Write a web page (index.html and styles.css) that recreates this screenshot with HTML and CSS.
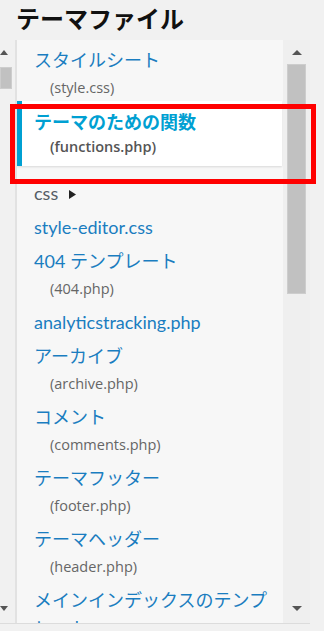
FILE: index.html
```html
<!DOCTYPE html>
<html lang="ja">
<head>
    <meta charset="UTF-8">
    <meta name="viewport" content="width=device-width, initial-scale=1.0">
    <title>テーマファイル</title>
    <link rel="stylesheet" href="styles.css">
</head>
<body>
    <h2 class="title">テーマファイル</h2>

    <div class="editor">
        <div class="bar bar-left">
            <span class="arrow up"></span>
            <span class="thumb"></span>
            <span class="arrow down"></span>
        </div>

        <ul class="file-list">
            <li class="first">
                <a href="#">スタイルシート</a>
                <span class="file">(style.css)</span>
            </li>
            <li class="highlight">
                <a href="#">テーマのための関数</a>
                <span class="file">(functions.php)</span>
            </li>
            <li class="folder">
                css
                <svg class="caret" width="7" height="9" viewBox="0 0 7 9"><path d="M0 0 L7 4.5 L0 9 Z" fill="#222"/></svg>
            </li>
            <li><a href="#">style-editor.css</a></li>
            <li>
                <a href="#">404 テンプレート</a>
                <span class="file">(404.php)</span>
            </li>
            <li><a href="#">analyticstracking.php</a></li>
            <li>
                <a href="#">アーカイブ</a>
                <span class="file">(archive.php)</span>
            </li>
            <li>
                <a href="#">コメント</a>
                <span class="file">(comments.php)</span>
            </li>
            <li>
                <a href="#">テーマフッター</a>
                <span class="file">(footer.php)</span>
            </li>
            <li>
                <a href="#">テーマヘッダー</a>
                <span class="file">(header.php)</span>
            </li>
            <li>
                <a href="#">メインインデックスのテンプレート</a>
                <span class="file">(index.php)</span>
            </li>
        </ul>

        <div class="bar bar-right">
            <span class="arrow up"></span>
            <span class="thumb"></span>
            <span class="arrow down"></span>
        </div>
    </div>

    <!-- 赤枠 -->
    <div class="marker"></div>
</body>
</html>
```

FILE: styles.css
```css
/* テーマ編集ファイル一覧 */
body {
    font-family: "Lato", "Noto Sans CJK JP", sans-serif;
    background-color: #f1f1f1;
    color: #23282d;
    margin: 0;
    padding: 0;
}

.title {
    font-family: "Noto Sans CJK JP", sans-serif;
    font-size: 24px;
    font-weight: bold;
    line-height: 36px;
    margin: 0;
    padding: 0 0 0 16px;
    height: 40px;
    color: #111;
}

.editor {
    display: flex;
    height: 583px;
    width: 310px;
    border-bottom: 1px solid #dcdcdc;
}

.bar {
    display: flex;
    flex-direction: column;
}

.bar-left {
    width: 15px;
    border-right: 2px solid #e2e2e2;
}

.bar-left .thumb {
    width: 12px;
    height: 22px;
    margin-top: 12px;
}

.bar-right {
    width: 27px;
    background-color: #efefef;
    align-items: center;
}

.bar-right .thumb {
    width: 19px;
    height: 230px;
    margin-top: 9px;
}

.arrow {
    width: 0;
    height: 0;
    border-left: 5px solid transparent;
    border-right: 5px solid transparent;
}

.arrow.up {
    border-bottom: 5px solid #555;
    margin-top: 10px;
}

.arrow.down {
    border-top: 5px solid #555;
    margin-top: auto;
    margin-bottom: 12px;
}

.bar-left .arrow {
    border-left-width: 4px;
    border-right-width: 4px;
}

.thumb {
    background-color: #c1c1c1;
    box-shadow: inset 0 0 0 1px #cdcdcd;
}

.file-list {
    list-style: none;
    margin: 0;
    padding: 3px 0 0 0;
    width: 266px;
    background-color: #f7f7f7;
    overflow: hidden;
}

.file-list li {
    padding: 3px 10px 3px 17px;
}

.file-list li.first {
    padding-bottom: 0;
}

.file-list a {
    display: block;
    font-size: 18px;
    line-height: 28px;
    color: #1a7dc0;
    text-decoration: none;
}

.file {
    display: block;
    font-family: "Open Sans", sans-serif;
    font-size: 14.5px;
    line-height: 27px;
    padding-left: 16px;
    color: #666;
}

.highlight {
    background-color: #fff;
    box-shadow: inset 5px 0 0 #00a0d2, 0 1px 2px rgba(0, 0, 0, 0.12);
    margin: 0 1px 10px 0;
}

.file-list li.highlight {
    padding-top: 7px;
    padding-bottom: 8px;
}

.highlight a {
    color: #00a0d2;
    font-weight: bold;
}

.highlight .file {
    line-height: 22px;
    font-weight: 600;
    color: #555;
}

.folder {
    font-size: 18px;
    line-height: 28px;
    color: #555d66;
}

.caret {
    margin-left: 6px;
    vertical-align: 1px;
}

.marker {
    position: absolute;
    left: 10px;
    top: 104px;
    width: 296px;
    height: 70px;
    border: 5px solid #ff0000;
}
```
